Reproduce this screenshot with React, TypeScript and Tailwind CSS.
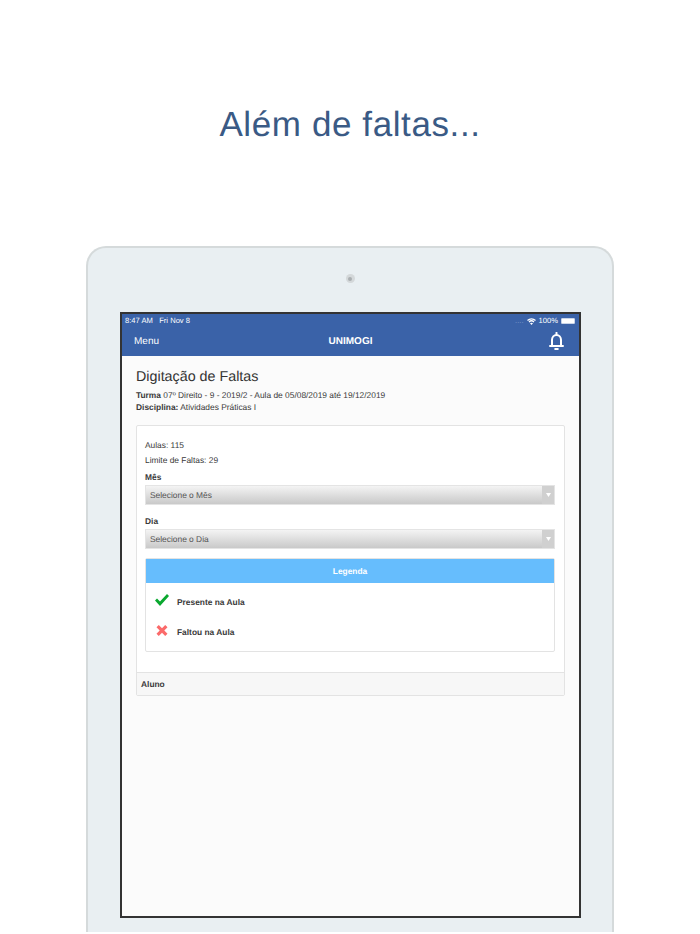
function SelectBox({ label }: { label: string }) {
  return (
    <div className="flex h-[20px] w-full border border-[#e4e4e4] bg-gradient-to-b from-[#f4f4f4] to-[#c9c9c9]">
      <span className="flex-1 pl-[4px] text-[8.4px] leading-[18px] text-[#555555]">{label}</span>
      <span className="flex w-[12px] items-center justify-center bg-[#d0d0d0]">
        <svg width="5" height="4" viewBox="0 0 5 4">
          <path d="M0 0h5L2.500 4z" fill="#ffffff" />
        </svg>
      </span>
    </div>
  );
}

export default function App() {
  return (
    <div className="h-[934px] w-[700px] overflow-hidden bg-white font-['Liberation_Sans',sans-serif] [text-rendering:geometricPrecision]">
      <h1 className="pt-[103px] text-center text-[35px] leading-[44px] tracking-[0.6px] text-[#3a5a85]">Além de faltas...</h1>

      <div className="ml-[86px] mt-[99px] h-[686px] w-[528px] rounded-t-[20px] border-x-2 border-t-2 border-[#d5dadb] bg-[#e9eff2] pl-[32px] pr-[31px] pt-[26px]">
        <div className="flex justify-center pr-[1px]">
          <span className="flex h-[9px] w-[9px] items-center justify-center rounded-full bg-[#d4d8da]">
            <span className="h-[4px] w-[4px] rounded-full bg-[#a9aeb0]" />
          </span>
        </div>
        <div className="mt-[29px] flex h-[606px] flex-col border-2 border-[#333333] bg-[#fbfbfb]">
          <div className="h-[42px] shrink-0 bg-[#3a62a8] text-white">
            <div className="flex h-[14px] items-center justify-between pl-[3px] pr-[4px] text-[7.6px] leading-none">
              <span>8:47 AM &nbsp; Fri Nov 8</span>
              <span className="flex items-center gap-[3px]">
                <span className="text-[#7f9acb]">....</span>
                <svg width="9" height="7" viewBox="0 0 18 14" fill="none" stroke="#ffffff" strokeWidth="2.400">
                  <path d="M1 5C5.500.5 12.500.5 17 5M4 8c3-3 7-3 10 0" />
                  <path d="M9 14 6 10.500c2-1.500 4-1.500 6 0z" fill="#ffffff" stroke="none" />
                </svg>
                <span>100%</span>
                <span className="flex h-[6px] w-[14px] items-center rounded-[1px] border border-[#c9d4e8] bg-white" />
              </span>
            </div>
            <div className="relative flex h-[28px] items-center justify-between pl-[12px] pr-[15px]">
              <span className="text-[10px] leading-none">Menu</span>
              <span className="absolute inset-x-0 text-center text-[10px] font-bold leading-none">UNIMOGI</span>
              <svg width="15" height="18" viewBox="0 0 15 18" fill="none" stroke="#ffffff" strokeWidth="2" className="-translate-y-[1px]">
                <path d="M7.500 .8V3M3 13.500V8a4.500 5 0 0 1 9 0v5.500M1 14h13" strokeLinecap="round" />
                <path d="M6.200 17h2.600" strokeLinecap="round" />
              </svg>
            </div>
          </div>

          <div className="flex-1 px-[14px] pt-[13px]">
            <h2 className="text-[14.3px] leading-[17px] text-[#333333]">Digitação de Faltas</h2>
            <p className="mt-[3px] text-[8.4px] leading-[12px] text-[#3a3a3a]">
              <b>Turma</b> 07º Direito - 9 - 2019/2 - Aula de 05/08/2019 até 19/12/2019
            </p>
            <p className="text-[8.4px] leading-[12px] text-[#3a3a3a]">
              <b>Disciplina:</b> Atividades Práticas I
            </p>

            <div className="mt-[12px] rounded-[2px] border border-[#e3e3e3] bg-white">
              <div className="pb-[20px] pl-[8px] pr-[9px] pt-[14px] text-[8.4px] text-[#3a3a3a]">
                <p className="leading-[11px]">Aulas: 115</p>
                <p className="mt-[4px] leading-[11px]">Limite de Faltas: 29</p>
                <p className="mt-[6px] font-bold leading-[11px]">Mês</p>
                <div className="mt-[2px]">
                  <SelectBox label="Selecione o Mês" />
                </div>
                <p className="mt-[11px] font-bold leading-[11px]">Dia</p>
                <div className="mt-[2px]">
                  <SelectBox label="Selecione o Dia" />
                </div>
                <div className="mt-[9px] rounded-[2px] border border-[#e3e3e3]">
                  <div className="bg-[#66bdfd] text-center text-[8.4px] font-bold leading-[24px] text-white">Legenda</div>
                  <div className="px-[9px] pb-[4px] pt-[4px]">
                    <div className="flex h-[30px] items-center">
                      <svg width="14" height="12" viewBox="0 0 14 12" className="-translate-y-[2px]">
                        <path d="M0 6.500 2 4.500 5 7.500 12 0l2 2-9 10z" fill="#0aa82f" />
                      </svg>
                      <span className="ml-[8px] font-bold">Presente na Aula</span>
                    </div>
                    <div className="flex h-[30px] items-center">
                      <svg width="14" height="11" viewBox="0 0 12 12" className="-translate-y-[2px]">
                        <path d="M2.500 0 6 3.500 9.500 0 12 2.500 8.500 6 12 9.500 9.500 12 6 8.500 2.500 12 0 9.500 3.500 6 0 2.500z" fill="#fb6a6a" />
                      </svg>
                      <span className="ml-[8px] font-bold">Faltou na Aula</span>
                    </div>
                  </div>
                </div>
              </div>
              <div className="border-t border-[#e3e3e3] bg-[#f7f7f7] px-[4px] pt-[1px] text-[8.4px] font-bold leading-[21px] text-[#3a3a3a]">Aluno</div>
            </div>
          </div>
        </div>
      </div>
    </div>
  );
}
